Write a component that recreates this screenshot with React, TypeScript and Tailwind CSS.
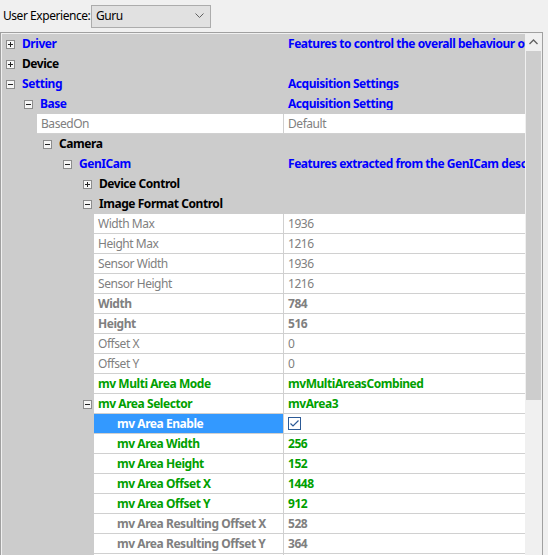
import React from 'react';

const blue = 'text-[#0000ff] font-bold';
const black = 'text-black font-bold';
const grey = 'text-[#808080]';
const greyBold = 'text-[#808080] font-bold';
const green = 'text-[#00a000] font-bold';

type Cat = {
  kind: 'cat';
  pad: string;
  open: boolean;
  name: string;
  cls: string;
  desc?: string;
};

type Prop = {
  kind: 'prop';
  spacer: string;
  nameW: string;
  textPad: string;
  box?: boolean;
  name: string;
  value: string;
  cls: string;
  selected?: boolean;
  check?: boolean;
};

type Row = Cat | Prop;

// leaves under "Image Format Control"
const leaf = { kind: 'prop' as const, spacer: 'w-[92px]', nameW: 'w-[190px]', textPad: 'pl-[4px]' };
// children of "mv Area Selector"
const area = { kind: 'prop' as const, spacer: 'w-[92px]', nameW: 'w-[190px]', textPad: 'pl-[23px]' };

const rows: Row[] = [
  { kind: 'cat', pad: 'pl-[4px]', open: false, name: 'Driver', cls: blue, desc: 'Features to control the overall behaviour of the driver' },
  { kind: 'cat', pad: 'pl-[4px]', open: false, name: 'Device', cls: black },
  { kind: 'cat', pad: 'pl-[4px]', open: true, name: 'Setting', cls: blue, desc: 'Acquisition Settings' },
  { kind: 'cat', pad: 'pl-[22px]', open: true, name: 'Base', cls: blue, desc: 'Acquisition Setting' },
  { kind: 'prop', spacer: 'w-[35px]', nameW: 'w-[247px]', textPad: 'pl-[4px]', name: 'BasedOn', value: 'Default', cls: grey },
  { kind: 'cat', pad: 'pl-[41px]', open: true, name: 'Camera', cls: black },
  { kind: 'cat', pad: 'pl-[61px]', open: true, name: 'GenICam', cls: blue, desc: 'Features extracted from the GenICam description' },
  { kind: 'cat', pad: 'pl-[81px]', open: false, name: 'Device Control', cls: black },
  { kind: 'cat', pad: 'pl-[81px]', open: true, name: 'Image Format Control', cls: black },
  { ...leaf, name: 'Width Max', value: '1936', cls: grey },
  { ...leaf, name: 'Height Max', value: '1216', cls: grey },
  { ...leaf, name: 'Sensor Width', value: '1936', cls: grey },
  { ...leaf, name: 'Sensor Height', value: '1216', cls: grey },
  { ...leaf, name: 'Width', value: '784', cls: greyBold },
  { ...leaf, name: 'Height', value: '516', cls: greyBold },
  { ...leaf, name: 'Offset X', value: '0', cls: grey },
  { ...leaf, name: 'Offset Y', value: '0', cls: grey },
  { ...leaf, name: 'mv Multi Area Mode', value: 'mvMultiAreasCombined', cls: green },
  { ...leaf, box: true, name: 'mv Area Selector', value: 'mvArea3', cls: green },
  { ...area, name: 'mv Area Enable', value: '', cls: green, selected: true, check: true },
  { ...area, name: 'mv Area Width', value: '256', cls: green },
  { ...area, name: 'mv Area Height', value: '152', cls: green },
  { ...area, name: 'mv Area Offset X', value: '1448', cls: green },
  { ...area, name: 'mv Area Offset Y', value: '912', cls: green },
  { ...area, name: 'mv Area Resulting Offset X', value: '528', cls: greyBold },
  { ...area, name: 'mv Area Resulting Offset Y', value: '364', cls: greyBold },
  { ...area, name: 'mv Area Resulting Width', value: '256', cls: greyBold },
];

function Expander({ open }: { open: boolean }) {
  return (
    <svg width="9" height="9" viewBox="0 0 9 9" className="shrink-0">
      <rect x="0.5" y="0.5" width="8" height="8" fill="#f6f6f6" stroke="#8c8c8c" />
      <path d="M2 4.5h5" stroke="#222" />
      {!open && <path d="M4.5 2v5" stroke="#222" />}
    </svg>
  );
}

function CheckBox() {
  return (
    <svg width="13" height="13" viewBox="0 0 13 13">
      <rect x="0.5" y="0.5" width="12" height="12" fill="#fff" stroke="#2c5a96" />
      <path d="M2.5 6.5l2.5 2.5 5.5-5.5" fill="none" stroke="#2c5a96" strokeWidth="1.2" />
    </svg>
  );
}

function CatRow({ row }: { row: Cat }) {
  return (
    <div className="flex h-[20px] items-center bg-[#cccccc]">
      <div className={`flex w-[282px] shrink-0 items-center gap-[7px] ${row.pad}`}>
        <Expander open={row.open} />
        <span className={`whitespace-nowrap ${row.cls}`}>{row.name}</span>
      </div>
      <div className="min-w-0 flex-1 overflow-hidden whitespace-nowrap pl-[4px] font-bold text-[#0000ff]">
        {row.desc}
      </div>
    </div>
  );
}

function PropRow({ row }: { row: Prop }) {
  return (
    <div className="flex h-[20px] bg-[#cccccc]">
      <div className={`flex shrink-0 items-center ${row.spacer} ${row.box ? 'pl-[81px]' : ''}`}>
        {row.box && <Expander open />}
      </div>
      <div className="flex min-w-0 flex-1 border-b border-[#d0d0d0] bg-white">
        <div
          className={`flex shrink-0 items-center overflow-hidden whitespace-nowrap border-r border-[#d0d0d0] ${row.nameW} ${row.textPad} ${
            row.selected ? 'bg-[#3399ff] font-bold text-white' : row.cls
          }`}
        >
          {row.name}
        </div>
        <div className={`flex min-w-0 flex-1 items-center overflow-hidden whitespace-nowrap pl-[4px] ${row.cls}`}>
          {row.check ? <CheckBox /> : row.value}
        </div>
      </div>
    </div>
  );
}

export default function App() {
  return (
    <div className="h-[555px] w-[548px] overflow-hidden bg-[#f0f0f0] font-['Noto_Sans','DejaVu_Sans',sans-serif] text-[12px] leading-none tracking-[-0.45px] text-black">
      <div className="flex h-[32px] items-center pl-[3px]">
        <span className="w-[88px] shrink-0 whitespace-nowrap">User Experience:</span>
        <div className="flex h-[23px] w-[120px] items-center justify-between border border-[#acacac] bg-[#e1e1e1] pl-[4px] pr-[6px]">
          <span>Guru</span>
          <svg width="9" height="6" viewBox="0 0 9 6">
            <path d="M0.5 0.5l4 4 4-4" fill="none" stroke="#606060" />
          </svg>
        </div>
      </div>

      <div className="flex h-[600px] w-[543px] border border-[#a0a0a0]">
        <div className="min-w-0 flex-1 bg-[#f0f0f0] pl-px pt-px">
          {rows.map((r, i) =>
            r.kind === 'cat' ? <CatRow key={i} row={r} /> : <PropRow key={i} row={r} />
          )}
        </div>
        <div className="flex w-[17px] shrink-0 flex-col bg-[#f0f0f0]">
          <div className="flex h-[18px] items-center justify-center">
            <svg width="9" height="6" viewBox="0 0 9 6">
              <path d="M0.5 5l4-4 4 4" fill="none" stroke="#606060" strokeWidth="1.3" />
            </svg>
          </div>
          <div className="mx-px h-[349px] bg-[#cdcdcd]" />
        </div>
      </div>
    </div>
  );
}
